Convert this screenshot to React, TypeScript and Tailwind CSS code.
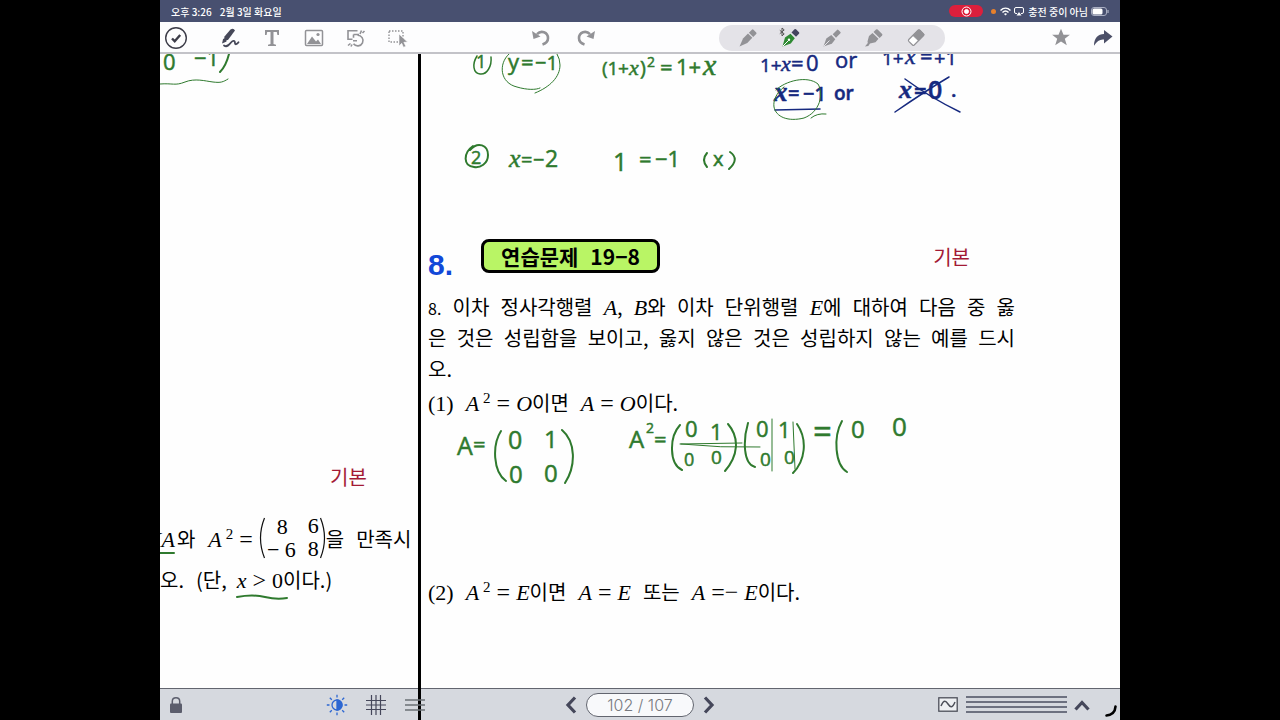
import type { ReactNode } from 'react';

const KR = "font-['Noto_Sans_CJK_KR',sans-serif]";

function Tool({ label, className = 'w-[42px]', children }: { label: string; className?: string; children: ReactNode }) {
  return (
    <button type="button" aria-label={label} className={`flex h-full shrink-0 items-center justify-center ${className}`}>
      {children}
    </button>
  );
}

function V({ children }: { children: ReactNode }) {
  return <i className="font-['Liberation_Serif',serif] text-[22px] leading-none italic">{children}</i>;
}

function M({ children }: { children: ReactNode }) {
  return <span className="font-['Liberation_Serif',serif] text-[22px] leading-none">{children}</span>;
}

function Eq({ children = '=' }: { children?: ReactNode }) {
  return <span className="mx-1.5 font-['Liberation_Serif',serif] text-[24px] leading-none">{children}</span>;
}

function Sq() {
  return <sup className="relative -top-2 ml-1 font-['Liberation_Serif',serif] text-[15px] leading-none align-baseline">2</sup>;
}

function H({ x, y, s = 22, children }: { x: number; y: number; s?: number; children: ReactNode }) {
  return (
    <text x={x} y={y} fontSize={s} strokeWidth="0.5" fill="currentColor" className="font-['Open_Sans',sans-serif]">
      {children}
    </text>
  );
}

function X({ x, y, s = 24 }: { x: number; y: number; s?: number }) {
  return (
    <text x={x} y={y} fontSize={s} strokeWidth="0.5" fill="currentColor" className="font-['Liberation_Serif',serif] italic">
      x
    </text>
  );
}

function StatusBar() {
  return (
    <header className={`flex h-[22px] shrink-0 items-center bg-[#485070] pr-[11px] pl-[11px] text-[10px] font-medium text-white ${KR}`}>
      <span>오후 3:26</span>
      <span className="ml-2">2월 3일 화요일</span>
      <span className="ml-auto flex h-3 w-[34px] items-center justify-center rounded-full bg-[#dc1f3c]">
        <svg width="11" height="11" viewBox="0 0 11 11" fill="none" stroke="#fff">
          <circle cx="5.500" cy="5.500" r="4.500" />
          <circle cx="5.500" cy="5.500" r="2" fill="#fff" />
        </svg>
      </span>
      <span className="ml-2 size-[5px] rounded-full bg-[#e8802c]" />
      <svg className="ml-1" width="11" height="9" viewBox="0 0 22 18" fill="none" stroke="#fff" strokeWidth="3">
        <path d="M1 7C7 1 15 1 21 7M5 11c4-4 8-4 12 0" />
        <path d="M8 14c2-2 4-2 6 0l-3 3z" fill="#fff" stroke="none" />
      </svg>
      <svg className="ml-[3px]" width="10" height="9" viewBox="0 0 20 18" fill="none" stroke="#fff" strokeWidth="2">
        <path d="M6 13H4q-3 0-3-3V4q0-3 3-3h12q3 0 3 3v6q0 3-3 3h-2" />
        <path d="M10 10l5 7H5z" fill="#fff" stroke="none" />
      </svg>
      <span className="ml-1">충전 중이 아님</span>
      <svg className="ml-[3px]" width="18" height="9" viewBox="0 0 18 9" fill="none">
        <rect x=".5" y=".5" width="15" height="8" rx="2.500" stroke="#a9aec2" />
        <rect x="1.500" y="1.500" width="10" height="6" rx="1.500" fill="#fff" />
        <path d="M17 3v3" stroke="#a9aec2" strokeWidth="1.300" />
      </svg>
    </header>
  );
}

function Toolbar() {
  return (
    <nav aria-label="도구" className="flex h-8 shrink-0 items-center border-b-2 border-[#c3c3c8] bg-[#fdfdfe] pt-px text-[#929296]">
      <Tool label="완료" className="w-8">
        <svg width="24" height="24" viewBox="0 0 24 24" fill="none" stroke="#3c3c48">
          <circle cx="12" cy="12" r="10.300" strokeWidth="1.400" />
          <path d="M8 12.500l2.700 2.700L16.200 9" strokeWidth="2.400" />
        </svg>
      </Tool>
      <Tool label="펜" className="ml-[17px] w-[42px]">
        <svg width="20" height="20" viewBox="0 0 20 20" fill="none">
          <path d="M10.500 1.500q3-1.700 4.500 1L8.500 11.200 3.500 14.500l1-6z" fill="#464859" />
          <path d="M2 15.500l1.200-5 3.500 3z" fill="#464859" />
          <path d="M4 17.500c3 2 5-.5 7-3 2.500-3 4-1.500 4 .5s2 1.500 3.500-.8" stroke="#464859" strokeWidth="1.800" strokeLinecap="round" />
        </svg>
      </Tool>
      <Tool label="텍스트">
        <svg width="16" height="18" viewBox="0 0 16 18" fill="currentColor">
          <path d="M1 1h14v5h-1.600L12.800 3H9.500v12l2.500.8V17H4v-1.200l2.500-.8V3H3.200L2.600 6H1z" />
        </svg>
      </Tool>
      <Tool label="이미지">
        <svg width="20" height="18" viewBox="0 0 20 18" fill="none" stroke="currentColor">
          <rect x="1.500" y="1.500" width="17" height="15" rx="1" strokeWidth="1.500" />
          <path d="M3 15l5-7.500 4 5 2-2 3 4.500z" fill="currentColor" stroke="none" />
          <circle cx="14" cy="5.500" r="1.600" fill="currentColor" stroke="none" />
        </svg>
      </Tool>
      <Tool label="도형">
        <svg width="20" height="20" viewBox="0 0 20 20" fill="none" stroke="currentColor" strokeWidth="1.600">
          <path d="M11.500 2.700H2v8.600h4.500M7.500 6.500H13M7.500 6.500v3.200" />
          <path d="M11.500 7.300a5.300 5.300 0 1 1-4 8.500M7 12.700h4" />
          <path d="M14 6l1.500-3.500M16.500 5l2-2M2 17.500l2.500-2M5 18.500l1-2" />
        </svg>
      </Tool>
      <Tool label="선택">
        <svg width="20" height="20" viewBox="0 0 20 20" fill="none" stroke="currentColor">
          <path d="M1 3h14v11H1z" strokeWidth="1.400" strokeDasharray="1.500 1.500" />
          <path d="M11 6l8.500 8-3.700.3 2 4-2.300 1-1.800-4L11 18z" fill="currentColor" stroke="#fdfdfe" strokeWidth=".6" />
        </svg>
      </Tool>
      <span className="flex-[100]" />
      <Tool label="실행 취소" className="w-[45px]">
        <svg width="20" height="18" viewBox="0 0 20 18" fill="none">
          <path d="M6 5.200C10 1 17 3 17 9.300c0 3-2 5-5.500 6.200" stroke="currentColor" strokeWidth="2.600" />
          <path d="M1 2l1.500 8 7-2.500z" fill="currentColor" />
        </svg>
      </Tool>
      <Tool label="다시 실행" className="w-[45px]">
        <svg className="-scale-x-100" width="20" height="18" viewBox="0 0 20 18" fill="none">
          <path d="M6 5.200C10 1 17 3 17 9.300c0 3-2 5-5.500 6.200" stroke="currentColor" strokeWidth="2.600" />
          <path d="M1 2l1.500 8 7-2.500z" fill="currentColor" />
        </svg>
      </Tool>
      <span className="flex-[111]" />
      <div className="flex h-[26px] items-center rounded-full bg-[#e4e3e8] px-2">
        <Tool label="연필">
          <svg width="20" height="20" viewBox="0 0 20 20" fill="currentColor">
            <path d="M1.500 18.500L5 10.500l5-5 4.300 4.300-5 5.200z" />
            <path d="M10.900 4.700l3-3q.8-.7 1.600 0l2.700 2.700q.8.800 0 1.600l-3 3z" />
          </svg>
        </Tool>
        <Tool label="만년필 블루투스">
          <svg width="22" height="22" viewBox="0 0 22 22" fill="none">
            <path d="M3.500 19.500L6 10.500l5.500-3.700 4.300 4.500-4 5.200z" fill="#2f8a33" />
            <path d="M4 19l5.500-5.500" stroke="#fff" strokeWidth="1" />
            <circle cx="10" cy="12.700" r="1.200" fill="#fff" />
            <path d="M12.500 5.500l3-3.200q.8-.6 1.500 0l3 3q.7.700 0 1.500l-3 3z" fill="#45455f" />
            <path d="M.8 3.300l4.400 3.600L3 8.900V1l2.200 1.900L.8 6.700" stroke="#555" strokeWidth="1" />
          </svg>
        </Tool>
        <Tool label="펜촉">
          <svg width="20" height="20" viewBox="0 0 20 20" fill="currentColor">
            <path d="M1.500 18.500L4.300 10.500l5-3.500 4 4.200-3.500 4.500z" />
            <path d="M2 18l5.500-5.500" stroke="#e4e3e8" strokeWidth="1" />
            <path d="M10.700 6.300L15 1.900q.7-.7 1.400 0l2 2q.7.700 0 1.400L14 9.700z" />
          </svg>
        </Tool>
        <Tool label="형광펜">
          <svg width="20" height="20" viewBox="0 0 20 20" fill="currentColor">
            <path d="M1 18.500L3.800 15l-.3-1.500L5 8l3.500-3 6 5.800-3 3.400-5.500 1.300-1.700 2.500z" />
            <path d="M9.500 4l2.500-2.500q.8-.7 1.600 0l4.500 4.500q.7.800 0 1.600L15.600 10z" />
          </svg>
        </Tool>
        <Tool label="지우개">
          <svg width="20" height="20" viewBox="0 0 20 20" fill="none" stroke="currentColor">
            <path d="M2.800 11.500L12 2.300q1-.8 1.900 0l3.600 3.600q.9.900 0 1.800l-9.300 9.300q-.9.800-1.700 0l-3.700-3.700q-.8-.9 0-1.800z" fill="#fff" strokeWidth="1.200" />
            <path d="M7 7.500L12 2.300q1-.8 1.900 0l3.600 3.600q.9.900 0 1.800l-5 5z" fill="currentColor" />
          </svg>
        </Tool>
      </div>
      <span className="flex-[99]" />
      <Tool label="즐겨찾기" className="mr-1.5 w-9">
        <svg width="20" height="19" viewBox="0 0 20 19" fill="currentColor">
          <path d="M10 .8l2.500 6h6.400l-5.100 4 2 6.400L10 13.400l-5.800 3.800 2-6.400-5.100-4h6.400z" />
        </svg>
      </Tool>
      <Tool label="공유" className="w-[35px]">
        <svg width="20" height="18" viewBox="0 0 20 18" fill="#4c5068">
          <path d="M11 1l8.500 6.500-8.500 7v-4C7 10 4 12 1 16.800 1 9 5 5 11 5z" />
        </svg>
      </Tool>
    </nav>
  );
}

function Ink() {
  return (
    <svg
      className="pointer-events-none absolute top-0 left-0 font-medium text-[#2f7a2e]"
      width="960"
      height="634"
      viewBox="160 54 960 634"
      fill="none"
      stroke="currentColor"
      strokeWidth="2"
      strokeLinecap="round"
    >
      <H x={163} y={70}>0</H>
      <H x={194} y={66}>−1</H>
      <path d="M229 54q-3 12-9 18" />
      <path d="M160 84c13-1 15 2 25-2s20-1 28 0 10 0 15-3" strokeWidth="1" />

      <path d="M477 56c-5 8-4 17 3 18s12-8 11-17" strokeWidth="1.500" />
      <H x={476} y={68} s={18}>1</H>
      <H x={508} y={70}>y</H>
      <H x={521} y={70}>=</H>
      <H x={535} y={70} s={20}>−1</H>
      <path d="M509 54c-11 10-9 29 8 33 10 3 19 3 23 1M535 93c15-6 25-16 25-28q0-6-3-11" strokeWidth="1" />

      <H x={602} y={75} s={19}>(1</H>
      <H x={618} y={75} s={19}>+</H>
      <X x={629} y={75} s={22} />
      <H x={640} y={75} s={20}>)</H>
      <H x={647} y={67} s={14}>2</H>
      <H x={660} y={75}>=</H>
      <H x={676} y={75}>1+</H>
      <X x={703} y={75} s={30} />

      <g className="text-[#16297f]">
        <H x={760} y={72} s={19}>1+</H>
        <X x={781} y={71} s={22} />
        <H x={791} y={71}>=</H>
        <H x={806} y={71}>0</H>
        <H x={835} y={68}>or</H>
        <H x={882} y={65} s={19}>1+</H>
        <X x={905} y={64} />
        <H x={920} y={64}>=</H>
        <H x={934} y={65} s={20}>+1</H>
        <g className="font-semibold">
          <X x={774} y={101} s={27} />
          <H x={788} y={100} s={20}>=</H>
          <H x={803} y={101} s={20}>−1</H>
          <H x={834} y={100} s={19}>or</H>
          <X x={899} y={98} s={26} />
          <H x={914} y={99}>=</H>
          <H x={928} y={99} s={25}>0</H>
          <H x={951} y={97} s={20}>.</H>
        </g>
        <path d="M775 110l45-1" strokeWidth="1.500" />
        <path d="M905 79q26 19 55 33M949 77q-22 13-54 35" strokeWidth="1.500" />
      </g>
      <path d="M776 90c9-9 31-15 42-6 6 10 2 28-14 34-16 4-28-1-30-11-1-6 2-14 10-20M811 118q6-5 15-4" strokeWidth="1" />

      <path d="M470 150c8-9 18-5 18 5 0 9-8 13-14 12-11-1-11-14-1-21" />
      <H x={471} y={164} s={18}>2</H>
      <X x={509} y={167} s={26} />
      <H x={521} y={167} s={20}>=</H>
      <H x={533} y={167} s={20}>−</H>
      <H x={545} y={167} s={23}>2</H>
      <H x={613} y={171} s={25}>1</H>
      <H x={639} y={167}>=</H>
      <H x={655} y={167} s={22}>−1</H>
      <path d="M707 153q-6 7 0 14M730 152q10 7-1 17" />
      <H x={713} y={166} s={20}>x</H>

      <H x={457} y={455} s={25}>A</H>
      <H x={473} y={452}>=</H>
      <path d="M501 431c-9 14-8 41 5 50M562 430c14 12 14 36 3 53" />
      <H x={508} y={449} s={25}>0</H>
      <H x={544} y={448} s={24}>1</H>
      <H x={509} y={483} s={24}>0</H>
      <H x={544} y={482} s={24}>0</H>

      <H x={629} y={448} s={24}>A</H>
      <H x={646} y={433} s={14}>2</H>
      <H x={654} y={447} s={22}>=</H>
      <path d="M680 425c-11 12-11 39 2 45M728 424c12 14 10 32-3 47M748 423c-5 17-5 41 7 44M797 424c11 16 8 37-4 49" />
      <H x={685} y={437}>0</H>
      <H x={710} y={440}>1</H>
      <H x={684} y={466} s={18}>0</H>
      <H x={711} y={464} s={19}>0</H>
      <path d="M680 444l62-1M681 444q40 4 79 3M772 419v52M793 422l2 47" strokeWidth="1" />
      <H x={756} y={437}>0</H>
      <H x={778} y={438}>1</H>
      <H x={760} y={466} s={19}>0</H>
      <H x={784} y={464} s={19}>0</H>
      <H x={813} y={443} s={33}>=</H>
      <path d="M842 421c-9 16-7 44 5 51" />
      <H x={851} y={438} s={24}>0</H>
      <H x={892} y={436} s={26}>0</H>

      <path d="M160 553h14M237 597q16-3 28 0t22 1" />
    </svg>
  );
}

function Sheet() {
  return (
    <main className={`relative flex min-h-0 flex-1 overflow-hidden bg-[#fefefe] text-[20px] leading-[31px] text-black ${KR}`}>
      <section className="w-[258px] shrink-0 pt-[407px]">
        <p className="pl-[170px] text-[#a31a35]">기본</p>
        <div className="mt-6 flex h-11 items-center whitespace-nowrap">
          <span className="-ml-3"><V>XA</V><span className="ml-0.5">와</span></span>
          <span className="ml-[13px]"><V>A</V><Sq /><Eq /></span>
          <span className="flex items-center">
            <svg width="7" height="42" viewBox="0 0 7 42" fill="none" stroke="#111" strokeWidth="1.200"><path d="M5.500 1Q-2.500 21 5.500 41" /></svg>
            <span className="grid grid-cols-[30px_23px] text-right leading-[22px]">
              <span className="pr-2"><M>8</M></span><M>6</M>
              <span><M>− 6</M></span><M>8</M>
            </span>
            <svg width="7" height="42" viewBox="0 0 7 42" fill="none" stroke="#111" strokeWidth="1.200"><path d="M1.500 1q8 20 0 40" /></svg>
          </span>
          <span>을</span>
          <span className="ml-3">만족시</span>
        </div>
        <p className="mt-1 flex h-[31px] items-baseline whitespace-nowrap">
          <span>오.</span>
          <span className="ml-3">(단,</span>
          <span className="ml-2.5"><V>x</V><Eq>&gt;</Eq><M>0</M>이다.)</span>
        </p>
      </section>
      <section className="min-w-0 flex-1 border-l-[3px] border-black pt-[185px] pl-[7px]">
        <div className="w-[587px]">
          <div className="flex h-[34px] items-center">
            <b className="w-[53px] pt-4 font-['Liberation_Sans',sans-serif] text-[30px] text-[#1248d8]">8.</b>
            <h1 className="flex h-[34px] w-[179px] items-center justify-center gap-3 rounded-lg border-[3px] border-black bg-[#b9f565] text-[21px] font-bold">
              <span>연습문제</span>
              <span>19−8</span>
            </h1>
            <span className="mr-[45px] ml-auto text-[#a31a35]">기본</span>
          </div>
          <div className="mt-[18px]">
            <p className="h-[31px] [text-align-last:justify]"><span className="text-[16px]">8.</span> 이차 정사각행렬 <V>A</V>, <V>B</V>와 이차 단위행렬 <V>E</V>에 대하여 다음 중 옳</p>
            <p className="h-[31px] [text-align-last:justify]">은 것은 성립함을 보이고, 옳지 않은 것은 성립하지 않는 예를 드시</p>
            <p className="h-[31px]">오.</p>
          </div>
          <p className="mt-[3px] flex h-[31px] items-baseline whitespace-nowrap">
            <M>(1)</M>
            <span className="ml-3"><V>A</V><Sq /><Eq /><V>O</V>이면</span>
            <span className="ml-3"><V>A</V><Eq /><V>O</V>이다.</span>
          </p>
          <p className="mt-[158px] flex h-[31px] items-baseline whitespace-nowrap">
            <M>(2)</M>
            <span className="ml-3"><V>A</V><Sq /><Eq /><V>E</V>이면</span>
            <span className="ml-3"><V>A</V><Eq /><V>E</V></span>
            <span className="ml-3">또는</span>
            <span className="ml-3"><V>A</V><Eq>=−</Eq><V>E</V>이다.</span>
          </p>
        </div>
      </section>
      <Ink />
    </main>
  );
}

function Footer() {
  return (
    <footer className="relative flex h-8 shrink-0 items-center border-t border-[#62656f] bg-[#d6d9df] text-[#45475a]">
      <span className="absolute -top-px left-[258px] h-8 w-[3px] bg-black" />
      <Tool label="잠금" className="w-8">
        <svg width="14" height="18" viewBox="0 0 14 18" fill="none" stroke="#5b5d6c">
          <path d="M3.300 8V5.300q0-3.500 3.700-3.500t3.700 3.500V8" strokeWidth="1.500" />
          <rect x="1" y="7.500" width="12" height="9.500" rx="1" fill="#5b5d6c" stroke="none" />
        </svg>
      </Tool>
      <span className="flex-[125]" />
      <Tool label="밝기" className="w-[39px]">
        <svg width="22" height="22" viewBox="0 0 22 22" fill="none" stroke="#2d67d2" strokeWidth="1.300">
          <circle cx="11" cy="11" r="5" />
          <path d="M11 6a5 5 0 0 1 0 10z" fill="#2d67d2" />
          <path d="M11 .8v2.700M11 18.500v2.700M.8 11h2.700M18.500 11h2.700M3.800 3.800l2 2M16.200 16.200l2 2M18.200 3.800l-2 2M5.800 16.200l-2 2" />
        </svg>
      </Tool>
      <Tool label="격자" className="w-[39px]">
        <svg width="20" height="20" viewBox="0 0 20 20" stroke="currentColor" strokeWidth="1.200">
          <path d="M5.500 0v20M10 0v20M14.500 0v20M0 5.500h20M0 10h20M0 14.500h20" />
        </svg>
      </Tool>
      <Tool label="줄" className="relative w-[39px]">
        <svg width="20" height="14" viewBox="0 0 20 14" stroke="#6b7076" strokeWidth="1.300">
          <path d="M0 2h20M0 7h20M0 12h20" />
        </svg>
      </Tool>
      <span className="flex-[122]" />
      <Tool label="이전 페이지" className="w-[30px]">
        <svg width="12" height="18" viewBox="0 0 12 18" fill="none" stroke="currentColor" strokeWidth="3.200"><path d="M10 1.500L3 9l7 7.500" /></svg>
      </Tool>
      <button type="button" className="h-6 w-[108px] shrink-0 rounded-full border border-[#62656f] bg-[#f8f9fb] font-['Inter',sans-serif] text-[16px] leading-none font-light text-[#77797f]">
        102 / 107
      </button>
      <Tool label="다음 페이지" className="w-[30px]">
        <svg width="12" height="18" viewBox="0 0 12 18" fill="none" stroke="currentColor" strokeWidth="3.200"><path d="M2 1.500L9 9l-7 7.500" /></svg>
      </Tool>
      <span className="flex-[214]" />
      <Tool label="곡선" className="w-5">
        <svg width="20" height="15" viewBox="0 0 20 15" fill="none" stroke="#4c4f59">
          <rect x=".8" y=".8" width="18.400" height="13.400" fill="#eef0f3" strokeWidth="1.300" />
          <path d="M3 9c3-7 5-5 7-2s4 5 7-2" strokeWidth="1.500" />
        </svg>
      </Tool>
      <span className="ml-2 flex w-[101px] shrink-0 flex-col gap-[3px]">
        <span className="h-0.5 bg-[#6d7180]" />
        <span className="h-0.5 bg-[#6d7180]" />
        <span className="h-0.5 bg-[#6d7180]" />
        <span className="h-0.5 bg-[#6d7180]" />
      </span>
      <Tool label="위로" className="w-[30px]">
        <svg width="16" height="12" viewBox="0 0 16 12" fill="none" stroke="currentColor" strokeWidth="3.200"><path d="M1.500 10.500L8 3.500l6.500 7" /></svg>
      </Tool>
      <svg className="mt-3 mr-[3px] ml-2" width="12" height="12" viewBox="0 0 12 12" fill="none" stroke="#000" strokeWidth="2.600" strokeLinecap="round">
        <path d="M10.500 1.500Q10 9.500 1.500 10.500" />
      </svg>
    </footer>
  );
}

export default function App() {
  return (
    <div className="flex h-screen justify-center bg-black">
      <div className="flex w-3/4 flex-col overflow-hidden">
        <StatusBar />
        <Toolbar />
        <Sheet />
        <Footer />
      </div>
    </div>
  );
}
